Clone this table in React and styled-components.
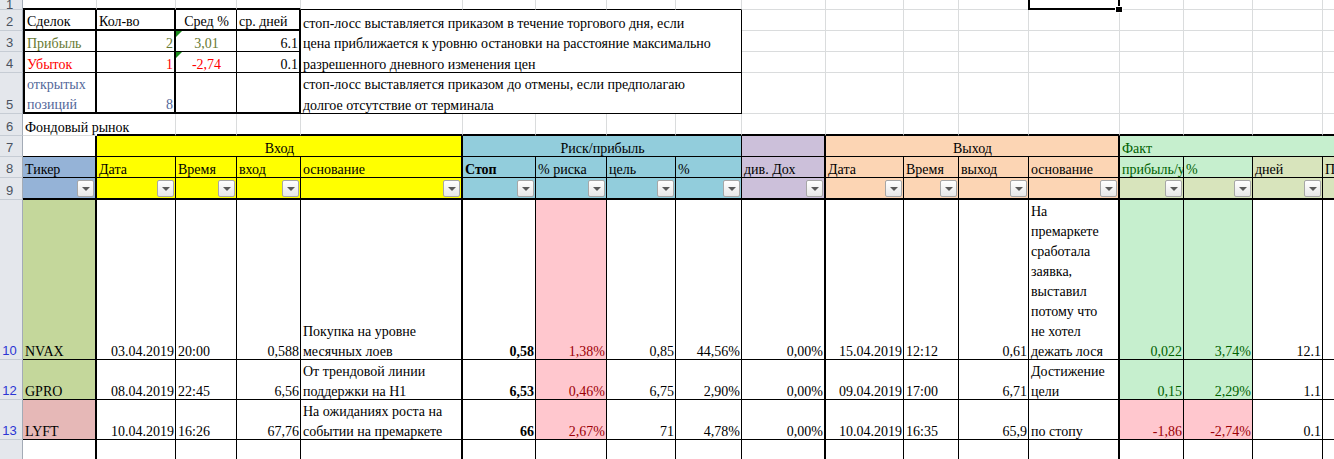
import React from 'react';
import styled, { createGlobalStyle } from 'styled-components';

const GlobalStyle = createGlobalStyle`
  html, body {
    margin: 0;
    padding: 0;
    background: #fff;
    overflow: hidden;
  }
`;

// column widths: row header, then A..R
const COLS = [23, 74, 79, 61, 64, 162, 73, 71, 69, 66, 84, 78, 55, 70, 91, 64, 69, 70, 80];
// rows 1..6, 7..9, 10, 12, 13, 21
const ROWS = [10, 21, 21, 21, 41, 22, 21, 21, 22, 160, 40, 40, 40];

const GRID = '#dadcdd';
const line = (k) =>
  k === 'K' ? '2px solid #000' : k === 'k' ? '1px solid #000' : k === 'n' ? '0' : `1px solid ${GRID}`;

const Sheet = styled.div`
  display: grid;
  grid-template-columns: ${COLS.map((c) => c + 'px').join(' ')};
  grid-template-rows: ${ROWS.map((r) => r + 'px').join(' ')};
  width: max-content;
  font-family: "Liberation Serif", "Times New Roman", serif;
  font-size: 14px;
  color: #000;
`;

const RowHead = styled.div`
  box-sizing: border-box;
  display: flex;
  align-items: flex-end;
  justify-content: center;
  padding-right: 3px;
  overflow: hidden;
  background: #e4e7ec;
  border-right: 1px solid #a3abb6;
  border-bottom: 1px solid #c6ccd4;
  color: ${(p) => (p.$filtered ? '#2b35d4' : '#4a5260')};
  font-family: "Liberation Sans", Arial, sans-serif;
  font-size: 13px;
  line-height: 20px;
`;

const Label = styled.span`
  margin-bottom: ${(p) => (p.$top ? '-6px' : '-2px')};
`;

const Cell = styled.div`
  position: relative;
  box-sizing: border-box;
  min-width: 0;
  display: flex;
  align-items: flex-end;
  justify-content: ${(p) =>
    p.$align === 'right' ? 'flex-end' : p.$align === 'center' ? 'center' : 'flex-start'};
  padding: 0 1px 0 2px;
  grid-column: span ${(p) => p.$span || 1};
  grid-row: span ${(p) => p.$rows || 1};
  background: ${(p) => p.$bg || 'transparent'};
  color: ${(p) => p.$color || '#000'};
  font-weight: ${(p) => (p.$bold ? 700 : 400)};
  border-right: ${(p) => line(p.$r)};
  border-bottom: ${(p) => line(p.$b)};
  ${(p) => p.$l && `border-left: ${line(p.$l)};`}
  overflow: ${(p) => (p.$clip ? 'hidden' : 'visible')};
  white-space: nowrap;
  z-index: ${(p) => (p.$front ? 1 : 'auto')};
`;

const Text = styled.span`
  display: block;
  line-height: ${(p) => p.$lh || 20}px;
  margin-bottom: -3px;
`;

const FilterButton = styled.span`
  box-sizing: border-box;
  width: 17px;
  height: 17px;
  margin-bottom: 1px;
  display: flex;
  align-items: center;
  justify-content: center;
  border: 1px solid #a7a7a7;
  border-radius: 2px;
  background: linear-gradient(#ffffff, #e7e7e7);

  &::after {
    content: '';
    margin-top: 1px;
    border-left: 4px solid transparent;
    border-right: 4px solid transparent;
    border-top: 4px solid #5a5a5a;
  }
`;

const ErrorMark = styled.span`
  position: absolute;
  top: 0;
  left: 0;
  width: 0;
  height: 0;
  border-top: 6px solid #1b8a1b;
  border-right: 6px solid transparent;
`;

const Selection = styled.span`
  position: absolute;
  left: -1px;
  right: -1px;
  top: -6px;
  bottom: -1px;
  border: 2px solid #000;
  z-index: 3;
  pointer-events: none;
`;

const Handle = styled.span`
  position: absolute;
  right: -4px;
  bottom: -4px;
  width: 6px;
  height: 5px;
  background: #000;
  box-shadow: 0 0 0 1px #fff;
`;

const OLIVE = '#687a33';
const RED = '#ff0000';
const SLATE = '#53689a';
const PINK = '#ffc7ce';
const PINK_T = '#9c0006';
const GREEN = '#c6efce';
const GREEN_T = '#006100';
const YELLOW = '#ffff00';
const BLUE = '#92cddc';
const PURPLE = '#ccc0da';
const PEACH = '#fcd5b4';
const OLIVE_L = '#d8e4bc';

// thick right border after A, E, J, N inside the table
const THICK = new Set([0, 4, 9, 13]);
const tableRight = (i) => (THICK.has(i) ? 'K' : 'k');

const headBg = [
  '#95b3d7', YELLOW, YELLOW, YELLOW, YELLOW, BLUE, BLUE, BLUE, BLUE, PURPLE,
  PEACH, PEACH, PEACH, PEACH, GREEN, GREEN, OLIVE_L, OLIVE_L,
];
const filterBg = headBg.map((c, i) => (i === 14 || i === 15 ? OLIVE_L : c));

const headers = [
  { v: 'Тикер' }, { v: 'Дата' }, { v: 'Время' }, { v: 'вход' }, { v: 'основание' },
  { v: 'Стоп', bold: true }, { v: '% риска' }, { v: 'цель' }, { v: '%' }, { v: 'див. Дох' },
  { v: 'Дата' }, { v: 'Время' }, { v: 'выход' }, { v: 'основание' },
  { v: 'прибыль/убыток', c: GREEN_T, clip: true }, { v: '%', c: GREEN_T }, { v: 'дней' },
  { v: 'Примечание', clip: true },
];

const R = 'right';
const win = { bg: GREEN, c: GREEN_T, a: R };
const loss = { bg: PINK, c: PINK_T, a: R };

const trades = [
  {
    n: 10,
    cells: [
      { v: 'NVAX', bg: '#c4d79b' },
      { v: '03.04.2019', a: R },
      { v: '20:00' },
      { v: '0,588', a: R },
      { v: ['Покупка на уровне', 'месячных лоев'] },
      { v: '0,58', a: R, bold: true },
      { v: '1,38%', ...loss },
      { v: '0,85', a: R },
      { v: '44,56%', a: R },
      { v: '0,00%', a: R },
      { v: '15.04.2019', a: R },
      { v: '12:12' },
      { v: '0,61', a: R },
      { v: ['На', 'премаркете', 'сработала', 'заявка,', 'выставил', 'потому что', 'не хотел', 'дежать лося'] },
      { v: '0,022', ...win },
      { v: '3,74%', ...win },
      { v: '12.1', a: R },
      { v: '' },
    ],
  },
  {
    n: 12,
    cells: [
      { v: 'GPRO', bg: '#c4d79b' },
      { v: '08.04.2019', a: R },
      { v: '22:45' },
      { v: '6,56', a: R },
      { v: ['От трендовой линии', 'поддержки на H1'] },
      { v: '6,53', a: R, bold: true },
      { v: '0,46%', ...loss },
      { v: '6,75', a: R },
      { v: '2,90%', a: R },
      { v: '0,00%', a: R },
      { v: '09.04.2019', a: R },
      { v: '17:00' },
      { v: '6,71', a: R },
      { v: ['Достижение', 'цели'] },
      { v: '0,15', ...win },
      { v: '2,29%', ...win },
      { v: '1.1', a: R },
      { v: '' },
    ],
  },
  {
    n: 13,
    cells: [
      { v: 'LYFT', bg: '#e6b8b7' },
      { v: '10.04.2019', a: R },
      { v: '16:26' },
      { v: '67,76', a: R },
      { v: ['На ожиданиях роста на', 'событии на премаркете'] },
      { v: '66', a: R, bold: true },
      { v: '2,67%', ...loss },
      { v: '71', a: R },
      { v: '4,78%', a: R },
      { v: '0,00%', a: R },
      { v: '10.04.2019', a: R },
      { v: '16:35' },
      { v: '65,9', a: R },
      { v: ['по стопу'] },
      { v: '-1,86', ...loss },
      { v: '-2,74%', ...loss },
      { v: '0.1', a: R },
      { v: '' },
    ],
  },
];

const Lines = ({ v, lh }) =>
  Array.isArray(v) ? (
    <Text $lh={lh}>
      {v.map((t, i) => (
        <React.Fragment key={i}>
          {i > 0 && <br />}
          {t}
        </React.Fragment>
      ))}
    </Text>
  ) : v ? (
    <Text>{v}</Text>
  ) : null;

const blanks = (n, key) => Array.from({ length: n }, (_, i) => <Cell key={key + i} />);

const App = () => (
  <>
    <GlobalStyle />
    <Sheet>
      {/* row 1 */}
      <RowHead><Label $top>1</Label></RowHead>
      {Array.from({ length: 18 }, (_, i) => (
        <Cell key={'r1' + i} $b={i < 4 ? 'K' : i < 9 ? 'k' : 'g'}>
          {i === 13 && (
            <Selection>
              <Handle />
            </Selection>
          )}
        </Cell>
      ))}

      {/* row 2 */}
      <RowHead><Label>2</Label></RowHead>
      <Cell $l="K" $r="K" $b="K"><Text>Сделок</Text></Cell>
      <Cell $r="K" $b="K"><Text>Кол-во</Text></Cell>
      <Cell $r="k" $b="K" $align="center"><Text>Сред %</Text></Cell>
      <Cell $r="K" $b="K"><Text>ср. дней</Text></Cell>
      <Cell $span={5} $rows={3} $r="k" $b="k">
        <Lines
          lh={20.5}
          v={[
            'стоп-лосс выставляется приказом в течение торгового дня, если',
            'цена приближается к уровню остановки на расстояние максимально',
            'разрешенного дневного изменения цен',
          ]}
        />
      </Cell>
      {blanks(9, 'r2')}

      {/* row 3 */}
      <RowHead><Label>3</Label></RowHead>
      <Cell $l="K" $r="K" $b="k" $color={OLIVE}><Text>Прибыль</Text></Cell>
      <Cell $r="K" $b="k" $align="right" $color={OLIVE}><Text>2</Text></Cell>
      <Cell $r="k" $b="k" $align="center" $color={OLIVE}>
        <ErrorMark />
        <Text>3,01</Text>
      </Cell>
      <Cell $r="K" $b="k" $align="right"><Text>6.1</Text></Cell>
      {blanks(9, 'r3')}

      {/* row 4 */}
      <RowHead><Label>4</Label></RowHead>
      <Cell $l="K" $r="K" $b="k" $color={RED}><Text>Убыток</Text></Cell>
      <Cell $r="K" $b="k" $align="right" $color={RED}><Text>1</Text></Cell>
      <Cell $r="k" $b="k" $align="center" $color={RED}>
        <ErrorMark />
        <Text>-2,74</Text>
      </Cell>
      <Cell $r="K" $b="k" $align="right"><Text>0.1</Text></Cell>
      {blanks(9, 'r4')}

      {/* row 5 */}
      <RowHead><Label>5</Label></RowHead>
      <Cell $l="K" $r="K" $b="K" $color={SLATE}>
        <Lines v={['открытых', 'позиций']} />
      </Cell>
      <Cell $r="K" $b="K" $align="right" $color={SLATE}><Text>8</Text></Cell>
      <Cell $r="k" $b="K" />
      <Cell $r="K" $b="K" />
      <Cell $span={5} $r="k" $b="k">
        <Lines
          lh={21}
          v={['стоп-лосс выставляется приказом до отмены, если предполагаю', 'долгое отсутствие от терминала']}
        />
      </Cell>
      {blanks(9, 'r5')}

      {/* row 6 */}
      <RowHead><Label>6</Label></RowHead>
      <Cell $r="n" $front><Text>Фондовый рынок</Text></Cell>
      {Array.from({ length: 17 }, (_, i) => (
        <Cell key={'r6' + i} $b="K" />
      ))}

      {/* row 7: section headers */}
      <RowHead><Label>7</Label></RowHead>
      <Cell $r="K" $b="k" />
      <Cell $span={4} $r="K" $b="k" $bg={YELLOW} $align="center"><Text>Вход</Text></Cell>
      <Cell $span={4} $r="k" $b="k" $bg={BLUE} $align="center"><Text>Риск/прибыль</Text></Cell>
      <Cell $r="K" $b="k" $bg={PURPLE} />
      <Cell $span={4} $r="K" $b="k" $bg={PEACH} $align="center"><Text>Выход</Text></Cell>
      <Cell $span={4} $r="k" $b="k" $bg={GREEN} $color={GREEN_T}><Text>Факт</Text></Cell>

      {/* row 8: column headers */}
      <RowHead><Label>8</Label></RowHead>
      {headers.map((h, i) => (
        <Cell
          key={'h' + i}
          $r={tableRight(i)}
          $b="k"
          $bg={headBg[i]}
          $color={h.c}
          $bold={h.bold}
          $clip={h.clip}
        >
          <Text>{h.v}</Text>
        </Cell>
      ))}

      {/* row 9: autofilter */}
      <RowHead><Label>9</Label></RowHead>
      {filterBg.map((bg, i) => (
        <Cell key={'f' + i} $r={tableRight(i)} $b="K" $bg={bg} $align="right">
          <FilterButton />
        </Cell>
      ))}

      {/* trades */}
      {trades.map((t) => (
        <React.Fragment key={t.n}>
          <RowHead $filtered><Label>{t.n}</Label></RowHead>
          {t.cells.map((c, i) => (
            <Cell
              key={i}
              $r={tableRight(i)}
              $b="k"
              $align={c.a}
              $bg={c.bg}
              $color={c.c}
              $bold={c.bold}
            >
              <Lines v={c.v} />
            </Cell>
          ))}
        </React.Fragment>
      ))}

      {/* row 21 */}
      <RowHead><Label>21</Label></RowHead>
      {Array.from({ length: 18 }, (_, i) => (
        <Cell key={'r21' + i} $r={tableRight(i)} $b="k" />
      ))}
    </Sheet>
  </>
);

export default App;
